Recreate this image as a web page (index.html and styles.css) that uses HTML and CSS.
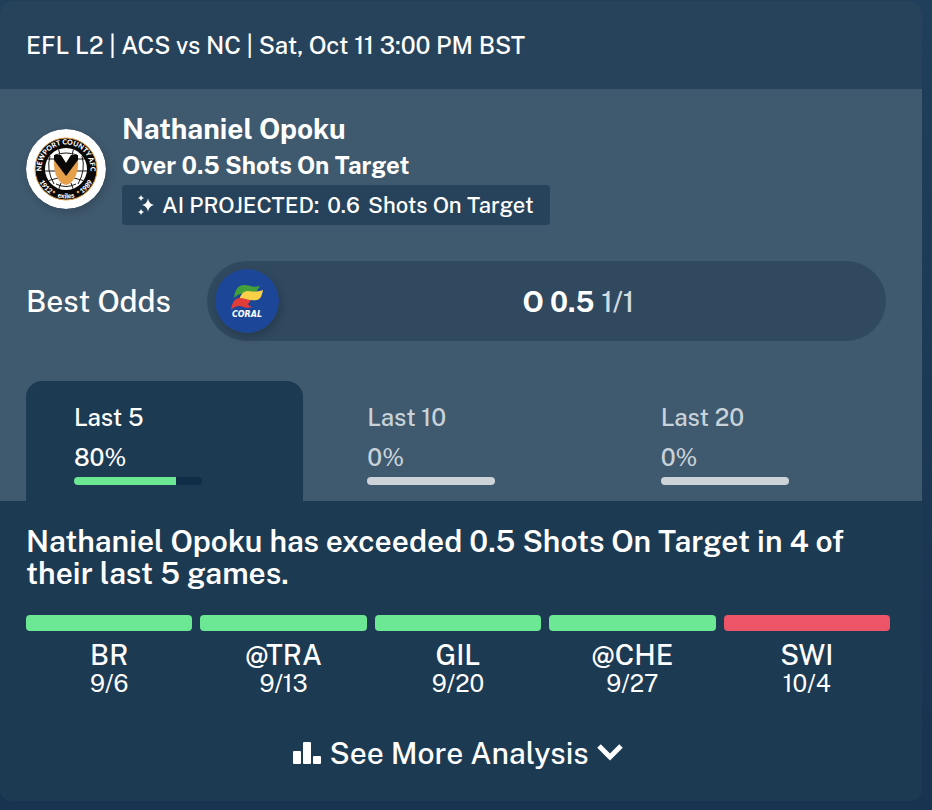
FILE: index.html
```html
<!DOCTYPE html>
<html lang="en">
<head>
    <meta charset="UTF-8">
    <meta name="viewport" content="width=device-width, initial-scale=1.0">
    <title>Nathaniel Opoku - Shots On Target</title>
    <link rel="stylesheet" href="styles.css">
</head>
<body>
    <article class="prop-card">
        <header class="card-header">EFL L2 | ACS vs NC | Sat, Oct 11 3:00 PM BST</header>

        <section class="card-top">
            <div class="player">
                <svg class="team-logo" viewBox="0 0 80 80" role="img" aria-label="Newport County AFC">
                    <defs>
                        <path id="crestTop" d="M17 48.400a24.500 24.500 0 1 1 46 0"/>
                        <path id="crestBottom" d="M10.500 40a29.500 29.500 0 0 0 59 0"/>
                        <clipPath id="ball"><circle cx="40" cy="40" r="21"/></clipPath>
                    </defs>
                    <circle cx="40" cy="40" r="40" fill="#fff"/>
                    <circle cx="40" cy="40" r="31" fill="#0b0908" stroke="#e2a04b" stroke-width="1"/>
                    <circle cx="40" cy="40" r="21" fill="#fff"/>
                    <g clip-path="url(#ball)" fill="none" stroke="#1a1715" stroke-width="1">
                        <path d="M32 18l2 8M48 18l-2 8M20 30h8M60 30h-8M18 42h11M62 42H51M21 52l11-3M59 52l-11-3M32 62l3-8M48 62l-3-8M24 27q-4 14 4 28M56 27q4 14-4 28M29 26q11-4 22 0M30 55q10 5 20 0"/>
                    </g>
                    <path d="M28 28h24q1 15-4 22-3 5-8 6-5-1-8-6-5-7-4-22z" fill="#e6a04a"/>
                    <path d="M34 25h12l-6 9z" fill="#fff"/>
                    <path d="M28 26h7l5 8 5-8h7v5L40 47 28 31z" fill="#0b0908"/>
                    <g class="crest-text">
                        <text><textPath href="#crestTop" startOffset="50%">NEWPORT COUNTY AFC</textPath></text>
                        <text><textPath href="#crestBottom" startOffset="23%">1912</textPath></text>
                        <text><textPath href="#crestBottom" startOffset="50%">exiles</textPath></text>
                        <text><textPath href="#crestBottom" startOffset="77%">1989</textPath></text>
                    </g>
                    <circle cx="28" cy="63" r="1.300" fill="#e6a04a"/>
                    <circle cx="52" cy="63" r="1.300" fill="#e6a04a"/>
                </svg>
                <div class="player-info">
                    <h2>Nathaniel Opoku</h2>
                    <h3>Over 0.5 Shots On Target</h3>
                    <p class="projection">
                        <svg class="sparkle" viewBox="0 0 16 20" fill="currentColor" aria-hidden="true">
                            <path d="M10 3.500Q11 9 16 10 11 11 10 16.500 9 11 4 10 9 9 10 3.500zM3 0l1 1.900 2 1.100-2 1.100L3 6 2 4.100 0 3l2-1.100zM3 14l1 1.900 2 1.100-2 1.100L3 20l-1-1.900L0 17l2-1.100z"/>
                        </svg>
                        <span>AI PROJECTED:</span>
                        <span>0.6</span>
                        <span>Shots On Target</span>
                    </p>
                </div>
            </div>

            <div class="odds">
                <span class="odds-label">Best Odds</span>
                <a class="odds-pill" href="#">
                    <svg class="book-logo" viewBox="0 0 64 64" role="img" aria-label="Coral">
                        <circle cx="32" cy="32" r="32" fill="#1c4798"/>
                        <path d="M19 29c1-8 4-13 10-13 6 0 8 3 16 1l-4 6c-3 2-6 1-9 1-5 0-9 1-13 5z" fill="#43a038"/>
                        <path d="M24 32c1-6 4-10 9-10 6 1 9 1 15-1-1 5-2 9-6 10-6 1-12-2-18 1z" fill="#fbd049"/>
                        <path d="M16 41c1-8 4-12 9-12 4 0 7 2 11 2l-3 4c1 2 2 2 4 3-5 2-8 0-12-1-4 0-6 1-9 4z" fill="#e23c38"/>
                        <text x="32" y="48" class="coral-text">CORAL</text>
                    </svg>
                    <span class="odds-value"><b>O 0.5</b> 1/1</span>
                </a>
            </div>

            <div class="tabs" role="tablist">
                <button class="tab active" role="tab" aria-selected="true">
                    <span>Last 5</span>
                    <span>80%</span>
                    <span class="meter"><span class="meter-fill" style="width: 80%"></span></span>
                </button>
                <button class="tab" role="tab" aria-selected="false">
                    <span>Last 10</span>
                    <span>0%</span>
                    <span class="meter"></span>
                </button>
                <button class="tab" role="tab" aria-selected="false">
                    <span>Last 20</span>
                    <span>0%</span>
                    <span class="meter"></span>
                </button>
            </div>
        </section>

        <section class="card-bottom">
            <p class="summary">Nathaniel Opoku has exceeded 0.5 Shots On Target in 4 of their last 5 games.</p>
            <ul class="games">
                <li class="game hit"><span class="team">BR</span><span class="date">9/6</span></li>
                <li class="game hit"><span class="team">@TRA</span><span class="date">9/13</span></li>
                <li class="game hit"><span class="team">GIL</span><span class="date">9/20</span></li>
                <li class="game hit"><span class="team">@CHE</span><span class="date">9/27</span></li>
                <li class="game miss"><span class="team">SWI</span><span class="date">10/4</span></li>
            </ul>
            <button class="more-btn">
                <svg width="28" height="22" viewBox="0 0 28 22" fill="currentColor" aria-hidden="true">
                    <rect y="9" width="8" height="13" rx="1"/>
                    <rect x="10" width="8" height="22" rx="1"/>
                    <rect x="20" y="14" width="8" height="8" rx="1"/>
                </svg>
                See More Analysis
                <svg width="26" height="18" viewBox="0 0 26 18" fill="none" stroke="currentColor" stroke-width="5" aria-hidden="true">
                    <path d="M2 2l11 11L24 2"/>
                </svg>
            </button>
        </section>
    </article>
</body>
</html>
```
FILE: styles.css
```css
* {
    box-sizing: border-box;
}
body {
    margin: 0;
    padding: 1px 10px 9px 0;
    min-height: 100vh;
    background: linear-gradient(#203f5a, #18334f);
    font-family: "Public Sans", Inter, "Liberation Sans", sans-serif;
    font-weight: 500;
    color: #fff;
}
h2,
h3,
p,
ul {
    margin: 0;
    padding: 0;
}
button {
    border: none;
    background: none;
    font: inherit;
    color: inherit;
    cursor: pointer;
}
.prop-card {
    border-radius: 12px;
    overflow: hidden;
    background-color: #1d3a53;
}
.card-header {
    padding: 28px 26px;
    background-color: #27435b;
    font-size: 24px;
    line-height: 32px;
}
.card-top {
    padding: 24px 32px 0 26px;
    background-color: #3f596e;
}

/* player */
.player {
    display: flex;
    align-items: center;
    gap: 16px;
}
.team-logo {
    flex: none;
    width: 80px;
    height: 80px;
    border-radius: 50%;
    box-shadow: 2px 4px 8px rgba(0, 0, 0, 0.15);
}
.crest-text {
    fill: #fff;
    font-size: 7px;
    font-weight: 900;
    font-family: Lato, sans-serif;
    text-anchor: middle;
}
.player-info h2 {
    font-size: 28px;
    line-height: 32px;
    font-weight: 700;
}
.player-info h3 {
    padding: 4px 0;
    font-size: 24px;
    line-height: 32px;
    font-weight: 700;
}
.projection {
    display: flex;
    align-items: center;
    gap: 8px;
    width: fit-content;
    padding: 4px 16px;
    border-radius: 4px;
    background-color: #27435b;
    font-size: 22px;
    line-height: 32px;
}
.sparkle {
    width: 16px;
    height: 20px;
}

/* odds */
.odds {
    display: flex;
    align-items: center;
    gap: 36px;
    margin-top: 36px;
    padding-right: 4px;
}
.odds-label {
    font-size: 30px;
}
.odds-pill {
    flex: 1;
    display: flex;
    align-items: center;
    padding: 8px;
    border-radius: 40px;
    background-color: #30495f;
    color: #d3dae0;
    text-decoration: none;
}
.book-logo {
    flex: none;
    width: 64px;
    height: 64px;
    border-radius: 50%;
    box-shadow: 2px 4px 8px rgba(0, 0, 0, 0.2);
}
.coral-text {
    fill: #fff;
    font: italic 700 8px "DejaVu Sans", sans-serif;
    text-anchor: middle;
}
.odds-value {
    flex: 1;
    text-align: center;
    font-size: 28px;
}
.odds-value b {
    color: #fff;
    font-weight: 700;
}

/* tabs */
.tabs {
    display: flex;
    gap: 16px;
    margin-top: 40px;
}
.tab {
    flex: 1;
    display: flex;
    flex-direction: column;
    align-items: flex-start;
    gap: 8px;
    padding: 20px 48px 16px;
    border-radius: 16px 16px 0 0;
    color: #c9d2d9;
    font-size: 24px;
    line-height: 32px;
}
.tab.active {
    background-color: #1d3a53;
    color: #fff;
}
.meter {
    width: 128px;
    max-width: 100%;
    height: 8px;
    margin-top: -4px;
    border-radius: 4px;
    overflow: hidden;
    background-color: #cdd4d9;
}
.tab.active .meter {
    background-color: #102d47;
}
.meter-fill {
    display: block;
    height: 100%;
    background-color: #6ce794;
}

/* results */
.card-bottom {
    padding: 24px 32px 24px 26px;
}
.summary {
    font-size: 30px;
    line-height: 32px;
    font-weight: 600;
}
.games {
    display: flex;
    gap: 8px;
    margin-top: 26px;
    list-style: none;
}
.game {
    flex: 1;
    display: flex;
    flex-direction: column;
    text-align: center;
}
.game::before {
    content: "";
    height: 16px;
    margin-bottom: 8px;
    border-radius: 4px;
}
.game.hit::before {
    background-color: #6ce794;
}
.game.miss::before {
    background-color: #ed5468;
}
.team {
    font-size: 28px;
    line-height: 32px;
}
.date {
    font-size: 24px;
    line-height: 24px;
    font-weight: 400;
}
.more-btn {
    display: flex;
    align-items: center;
    gap: 8px;
    margin: 34px auto 0;
    padding: 4px 0;
    font-size: 30px;
    line-height: 40px;
}
```
